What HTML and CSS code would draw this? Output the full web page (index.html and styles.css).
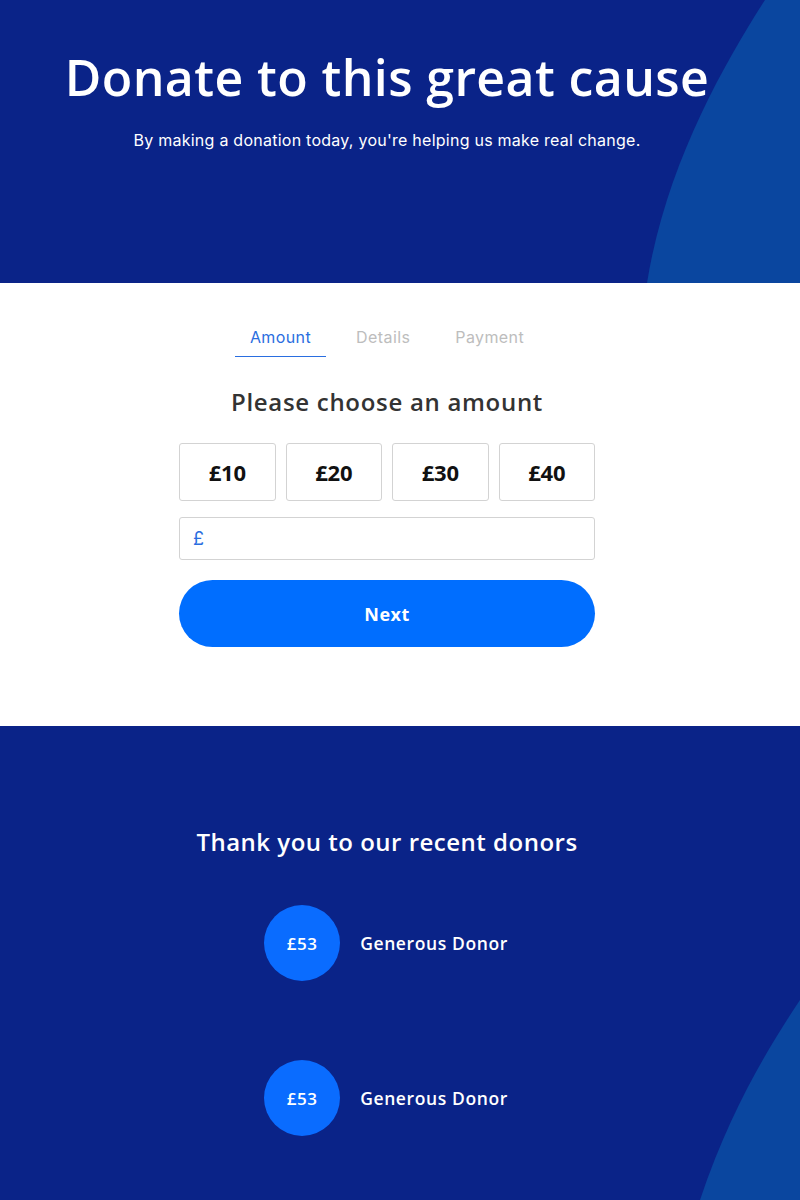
FILE: index.html
```html
<!DOCTYPE html>
<html lang="en">
<head>
<meta charset="utf-8">
<title>Donate</title>
<link rel="stylesheet" href="styles.css">
</head>
<body>
<header class="hero">
  <svg class="hero-curve" viewBox="0 0 200 283" preserveAspectRatio="none" aria-hidden="true">
    <path d="M165 0 C120 70 65 170 47 283 L200 283 L200 0 Z" fill="#0a469f"/>
  </svg>
  <div class="hero-inner">
    <h1 class="hero-title">Donate to this great cause</h1>
    <p class="hero-sub">By making a donation today, you're helping us make real change.</p>
  </div>
</header>

<main class="form-section">
  <div class="form-inner">
    <nav class="tabs">
      <span class="tab tab-active">Amount</span>
      <span class="tab">Details</span>
      <span class="tab">Payment</span>
    </nav>
    <h2 class="form-title">Please choose an amount</h2>
    <div class="amounts">
      <button class="amount">£10</button>
      <button class="amount">£20</button>
      <button class="amount">£30</button>
      <button class="amount">£40</button>
    </div>
    <label class="custom">
      <span class="custom-symbol">£</span>
      <input class="custom-input" type="text" aria-label="Custom amount">
    </label>
    <button class="next">Next</button>
  </div>
</main>

<section class="donors">
  <svg class="donors-curve" viewBox="0 0 100 200" preserveAspectRatio="none" aria-hidden="true">
    <path d="M100 0 C70 45 30 110 0 200 L100 200 Z" fill="#0a469f"/>
  </svg>
  <div class="donors-inner">
    <h2 class="donors-title">Thank you to our recent donors</h2>
    <ul class="donor-list">
      <li class="donor"><span class="donor-amount">£53</span><span class="donor-name">Generous Donor</span></li>
      <li class="donor"><span class="donor-amount">£53</span><span class="donor-name">Generous Donor</span></li>
    </ul>
  </div>
</section>
</body>
</html>
```

FILE: styles.css
```css
* { box-sizing: border-box; }

body {
  margin: 0;
  font-family: Inter, "Noto Sans", Arial, sans-serif;
  background: #0a2388;
}

.hero {
  position: relative;
  height: 283px;
  background: #0a2388;
  overflow: hidden;
}

.hero-curve {
  position: absolute;
  right: 0;
  top: 0;
  width: 200px;
  height: 283px;
}

.hero-inner {
  position: relative;
  width: 774px;
  padding-top: 47px;
  text-align: center;
  color: #fff;
}

.hero-title {
  margin: 0;
  font-family: "Open Sans", Inter, sans-serif;
  font-weight: 600;
  font-size: 50px;
  line-height: 60px;
  letter-spacing: 0.4px;
}

.hero-sub {
  margin: 22px 0 0;
  font-size: 16px;
  line-height: 22px;
  font-weight: 400;
  letter-spacing: 0.25px;
}

.form-section {
  background: #fff;
  height: 443px;
}

.form-inner {
  width: 416px;
  margin-left: 179px;
  padding-top: 44px;
  display: flex;
  flex-direction: column;
  align-items: center;
}

.tabs {
  display: flex;
  gap: 15px;
}

.tab {
  padding: 0 15px 9px;
  font-size: 16px;
  line-height: 20px;
  letter-spacing: 0.4px;
  color: #bdbdbd;
  border-bottom: 1px solid transparent;
}

.tab-active {
  color: #2a6ee0;
  border-bottom-color: #2a6ee0;
}

.form-title {
  margin: 30px 0 0;
  font-family: "Open Sans", Inter, sans-serif;
  font-size: 24px;
  line-height: 30px;
  font-weight: 600;
  letter-spacing: 0.7px;
  color: #333;
}

.amounts {
  margin-top: 26px;
  width: 100%;
  display: grid;
  grid-template-columns: repeat(4, 1fr);
  gap: 10px;
}

.amount {
  height: 58px;
  background: #fff;
  border: 1px solid #d3d3d3;
  border-radius: 3px;
  font-family: "Open Sans", Inter, sans-serif;
  font-size: 22px;
  font-weight: 700;
  color: #111;
  letter-spacing: -0.3px;
}

.custom {
  margin-top: 16px;
  width: 100%;
  height: 43px;
  display: flex;
  align-items: center;
  border: 1px solid #d3d3d3;
  border-radius: 3px;
  padding-left: 13px;
}

.custom-symbol {
  color: #2a6ee0;
  font-size: 18px;
}

.custom-input {
  flex: 1;
  border: 0;
  outline: 0;
  height: 100%;
  background: transparent;
}

.next {
  margin-top: 20px;
  width: 100%;
  height: 67px;
  border: 0;
  border-radius: 34px;
  background: #006eff;
  color: #fff;
  font-family: "Open Sans", Inter, sans-serif;
  font-size: 18px;
  font-weight: 700;
  letter-spacing: 0.5px;
}

.donors {
  position: relative;
  height: 474px;
  background: #0a2388;
  overflow: hidden;
}

.donors-curve {
  position: absolute;
  right: 0;
  bottom: 0;
  width: 100px;
  height: 200px;
}

.donors-inner {
  position: relative;
  width: 774px;
  padding-top: 100px;
  display: flex;
  flex-direction: column;
  align-items: center;
  color: #fff;
}

.donors-title {
  margin: 0;
  font-family: "Open Sans", Inter, sans-serif;
  font-size: 24px;
  line-height: 32px;
  font-weight: 600;
  letter-spacing: 0.5px;
}

.donor-list {
  list-style: none;
  margin: 47px 0 0;
  padding: 0;
  display: flex;
  flex-direction: column;
  gap: 79px;
}

.donor {
  display: flex;
  align-items: center;
  gap: 20px;
}

.donor-amount {
  width: 76px;
  height: 76px;
  border-radius: 50%;
  background: #0a6cff;
  display: flex;
  align-items: center;
  justify-content: center;
  font-family: "Open Sans", Inter, sans-serif;
  font-size: 17px;
  font-weight: 600;
  letter-spacing: 0.5px;
}

.donor-name {
  font-family: "Open Sans", Inter, sans-serif;
  font-size: 17.5px;
  font-weight: 600;
  letter-spacing: 0.6px;
  padding-right: 2px;
}
```
